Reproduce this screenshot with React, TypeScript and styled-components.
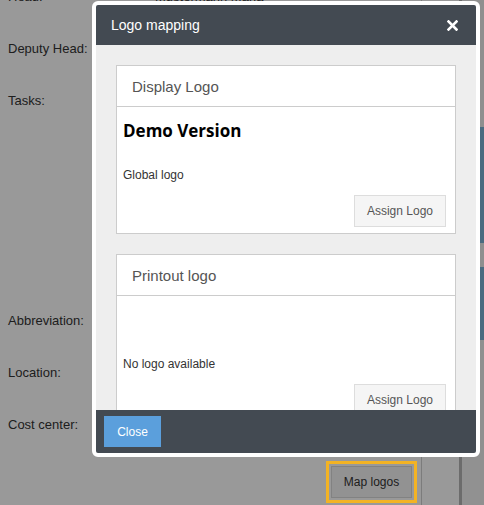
import React from "react";
import styled, { createGlobalStyle } from "styled-components";

const GlobalStyle = createGlobalStyle`
  html, body { margin: 0; padding: 0; background: #fff; overflow: hidden; }
  body { font-family: "Liberation Sans", Arial, sans-serif; }
  * { box-sizing: border-box; }
`;

const Page = styled.div`
  position: relative;
  display: flex;
  width: 484px;
  height: 505px;
  overflow: hidden;
  background: #fff;
`;

const Main = styled.div`
  width: 422px;
  flex: none;
  padding: 0 9px 0 8px;
  border-right: 1px solid #cfcfcf;
`;

const Form = styled.div`
  margin-top: -29px;
  display: flex;
  flex-direction: column;
`;

const Row = styled.div<{ $h?: number }>`
  display: grid;
  grid-template-columns: 147px 1fr;
  height: ${(p) => p.$h ?? 52}px;
`;

const Label = styled.div`
  font-size: 13px;
  line-height: 20px;
  color: #333;
  padding-top: 16px;
`;

const Value = styled.div`
  font-size: 13px;
  line-height: 20px;
  color: #333;
  padding-top: 16px;
`;

const Field = styled.div<{ $h?: number }>`
  margin-top: 10px;
  height: ${(p) => p.$h ?? 32}px;
  border: 1px solid #ccc;
  background: #fff;
`;

const ButtonCell = styled.div`
  grid-column: 2;
  display: flex;
  justify-content: flex-end;
  padding-top: 15px;
`;

const MapButton = styled.button`
  position: relative;
  width: 81px;
  height: 32px;
  background: #f3f3f3;
  border: 1px solid #d9d9d9;
  color: #333;
  font-family: "Liberation Sans", Arial, sans-serif;
  font-size: 12px;
  padding: 0;
  &::after {
    content: "";
    position: absolute;
    inset: -6px;
    border: 3px solid #f3b324;
    z-index: 30;
  }
`;

const Sidebar = styled.div`
  flex: 1;
  display: flex;
`;

const Gutter = styled.div`
  width: 37px;
  background: #fff;
`;

const Rail = styled.div`
  width: 21px;
  border-left: 3px solid #b5b5b5;
  background: #f2f2f2;
`;

const Strip = styled.div`
  width: 4px;
  display: flex;
  flex-direction: column;
  background: #f0f0f0;
`;

const StripBlock = styled.div<{ $h: number; $c: string }>`
  height: ${(p) => p.$h}px;
  background: ${(p) => p.$c};
`;

const Overlay = styled.div`
  position: absolute;
  inset: 0;
  background: rgba(0, 0, 0, 0.4);
  z-index: 10;
`;

const Modal = styled.div`
  position: absolute;
  left: 92px;
  top: 1px;
  z-index: 20;
  width: 388px;
  border: 4px solid #fff;
  border-radius: 6px;
  background: #fff;
  display: flex;
  flex-direction: column;
  overflow: hidden;
`;

const ModalHeader = styled.div`
  height: 40px;
  background: #434a52;
  display: flex;
  align-items: center;
  justify-content: space-between;
  padding: 0 18px 0 15px;
`;

const ModalTitle = styled.div`
  color: #fff;
  font-size: 14px;
`;

const CloseX = styled.button`
  width: 11px;
  height: 11px;
  padding: 0;
  border: none;
  background: none;
  display: flex;
  cursor: pointer;
`;

const ModalBody = styled.div`
  height: 365px;
  background: #eee;
  padding: 20px;
  overflow: hidden;
`;

const Panel = styled.div`
  background: #fff;
  border: 1px solid #ccc;
  margin-bottom: 20px;
`;

const PanelHeader = styled.div`
  height: 41px;
  border-bottom: 1px solid #ccc;
  display: flex;
  align-items: center;
  padding-left: 15px;
  font-size: 15px;
  color: #555;
`;

const PanelBody = styled.div`
  padding: 6px 9px 6px 6px;
`;

const LogoArea = styled.div`
  height: 54px;
  padding-top: 6px;
`;

const DemoLogo = styled.div`
  font-family: "Open Sans", "Noto Sans", sans-serif;
  font-weight: 700;
  font-size: 17px;
  color: #000;
`;

const Caption = styled.div`
  font-size: 12px;
  line-height: 17px;
  color: #333;
`;

const ButtonRow = styled.div`
  display: flex;
  justify-content: flex-end;
  margin-top: 11px;
`;

const AssignButton = styled.button`
  height: 32px;
  padding: 0 12px;
  background: #f5f5f5;
  border: 1px solid #ddd;
  color: #555;
  font-family: "Liberation Sans", Arial, sans-serif;
  font-size: 12px;
`;

const ModalFooter = styled.div`
  height: 43px;
  background: #434a52;
  padding: 6px 8px;
`;

const CloseButton = styled.button`
  width: 57px;
  height: 31px;
  padding: 0;
  border: none;
  background: #5b9fdc;
  color: #fff;
  font-family: "Liberation Sans", Arial, sans-serif;
  font-size: 12px;
`;

const panels = [
  { title: "Display Logo", logo: "Demo Version", caption: "Global logo" },
  { title: "Printout logo", logo: "", caption: "No logo available" },
];

export default function App() {
  return (
    <Page>
      <GlobalStyle />
      <Main>
        <Form>
          <Row>
            <Label>Head:</Label>
            <Value>Mustermann Maria</Value>
          </Row>
          <Row>
            <Label>Deputy Head:</Label>
            <Field />
          </Row>
          <Row $h={220}>
            <Label>Tasks:</Label>
            <Field $h={200} />
          </Row>
          <Row>
            <Label>Abbreviation:</Label>
            <Field />
          </Row>
          <Row>
            <Label>Location:</Label>
            <Field />
          </Row>
          <Row>
            <Label>Cost center:</Label>
            <Field />
          </Row>
          <Row>
            <ButtonCell>
              <MapButton>Map logos</MapButton>
            </ButtonCell>
          </Row>
        </Form>
      </Main>
      <Sidebar>
        <Gutter />
        <Rail />
        <Strip>
          <StripBlock $h={127} $c="#eeeeee" />
          <StripBlock $h={116} $c="#7cb2d5" />
          <StripBlock $h={24} $c="#eeeeee" />
          <StripBlock $h={73} $c="#7cb2d5" />
        </Strip>
      </Sidebar>
      <Overlay />
      <Modal>
        <ModalHeader>
          <ModalTitle>Logo mapping</ModalTitle>
          <CloseX aria-label="Close">
            <svg width="11" height="11" viewBox="0 0 11 11">
              <path d="M1.5 1.5 L9.5 9.5 M9.5 1.5 L1.5 9.5" stroke="#fff" strokeWidth="2.6" strokeLinecap="square" />
            </svg>
          </CloseX>
        </ModalHeader>
        <ModalBody>
          {panels.map((p) => (
            <Panel key={p.title}>
              <PanelHeader>{p.title}</PanelHeader>
              <PanelBody>
                <LogoArea>{p.logo && <DemoLogo>{p.logo}</DemoLogo>}</LogoArea>
                <Caption>{p.caption}</Caption>
                <ButtonRow>
                  <AssignButton>Assign Logo</AssignButton>
                </ButtonRow>
              </PanelBody>
            </Panel>
          ))}
        </ModalBody>
        <ModalFooter>
          <CloseButton>Close</CloseButton>
        </ModalFooter>
      </Modal>
    </Page>
  );
}
